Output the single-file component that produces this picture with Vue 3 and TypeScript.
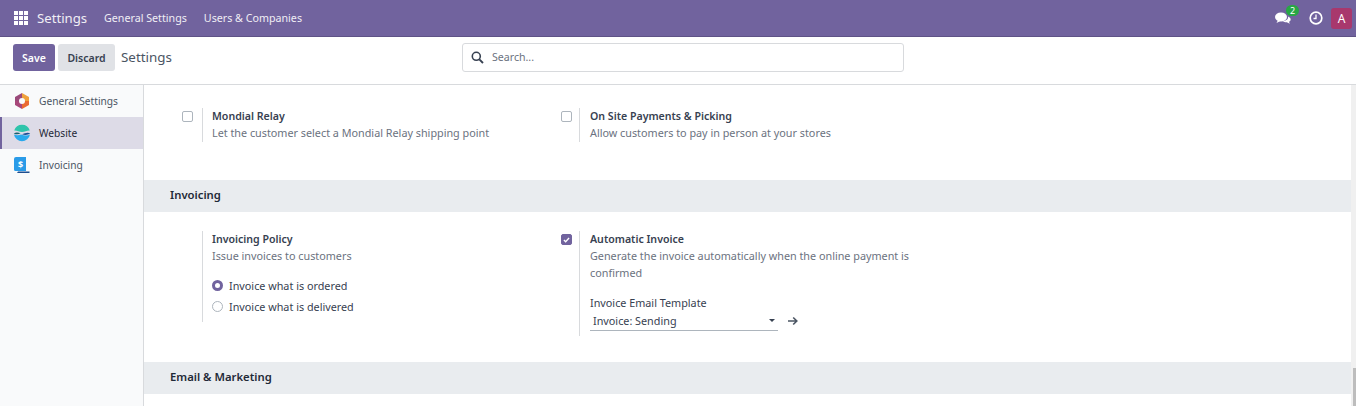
<script setup lang="ts">
const navItems = ['General Settings', 'Users & Companies']
</script>

<template>
  <div class="page">
    <header class="nav">
      <svg class="apps" width="14" height="14" viewBox="0 0 14 14" fill="#fff">
        <rect x="0" y="0" width="4" height="4" /><rect x="5" y="0" width="4" height="4" /><rect x="10" y="0" width="4" height="4" />
        <rect x="0" y="5" width="4" height="4" /><rect x="5" y="5" width="4" height="4" /><rect x="10" y="5" width="4" height="4" />
        <rect x="0" y="10" width="4" height="4" /><rect x="5" y="10" width="4" height="4" /><rect x="10" y="10" width="4" height="4" />
      </svg>
      <span class="brand">Settings</span>
      <a v-for="n in navItems" :key="n" class="nav-link">{{ n }}</a>
      <div class="nav-right">
        <span class="chat">
          <svg width="16" height="14" viewBox="0 0 16 14" fill="#fff">
            <ellipse cx="6" cy="6" rx="6" ry="4.6" />
            <path d="M3 9l-1.500 3 4-2z" />
            <path d="M13 5.500c2 .8 3 2 2.600 3.500-.3 1-1 1.500-1.600 1.800l.8 2-3-1.600c-1.500.1-3-.3-4-1.200 3 0 5.800-1.600 5.200-4.500z" />
          </svg>
          <span class="badge">2</span>
        </span>
        <svg class="clock" width="14" height="14" viewBox="0 0 14 14" fill="none" stroke="#fff">
          <circle cx="7" cy="7" r="5.800" stroke-width="1.700" />
          <path d="M7 3.500V7.500H4.500" stroke-width="1.300" />
        </svg>
        <span class="avatar">A</span>
      </div>
    </header>

    <div class="control">
      <button class="btn primary">Save</button>
      <button class="btn secondary">Discard</button>
      <span class="crumb">Settings</span>
      <div class="search">
        <svg width="13" height="13" viewBox="0 0 13 13" fill="none" stroke="#374151">
          <circle cx="5.300" cy="5.300" r="4" stroke-width="1.600" />
          <path d="M8.300 8.300L12 12" stroke-width="1.900" />
        </svg>
        <span class="placeholder">Search...</span>
      </div>
    </div>

    <div class="body">
      <aside class="side">
        <div class="side-item">
          <svg width="16" height="16" viewBox="0 0 16 16">
            <path d="M8 0L15 4V8H11A3 3 0 0 0 8 5V0Z" fill="#f0a13c" />
            <path d="M8 0V5A3 3 0 0 0 5 8H1V4Z" fill="#9a4a7a" />
            <path d="M1 8H5A3 3 0 0 0 8 11V16L1 12Z" fill="#a8487a" />
            <path d="M15 8V12L8 16V11A3 3 0 0 0 11 8Z" fill="#ea6a32" />
          </svg>
          <span>General Settings</span>
        </div>
        <div class="side-item active">
          <svg width="18" height="18" viewBox="0 0 18 18">
            <path d="M1.200 6.500A8.200 8.200 0 0 1 16.800 6.500C14 6.200 12 8 9 8 6 8 4 6.200 1.200 6.500Z" fill="#2fc4ab" />
            <path d="M.8 9.400C3 8 5.500 8.400 7.500 9.300 5.500 10.500 3 10.700.8 9.400Z" fill="#17606e" />
            <path d="M9 10.200C11.500 9.300 14.500 7.800 17.200 9.200 15 11 12 11.400 9 10.200Z" fill="#1c4f96" />
            <path d="M.9 10.600C3.500 11.600 6 11.300 8.200 10.500 11 11.800 14.500 12 17 10.500A8.200 8.200 0 0 1 .9 10.600Z" fill="#2aa9ec" />
          </svg>
          <span>Website</span>
        </div>
        <div class="side-item">
          <svg width="16" height="16" viewBox="0 0 16 16">
            <path d="M2 0H12V14H1.500A1.500 1.500 0 0 1 0 12.500V2A2 2 0 0 1 2 0Z" fill="#2a9be8" />
            <path d="M4 14.500H15.500V16H3Z" fill="#1d4e8f" />
            <text x="4" y="10.500" class="dollar">$</text>
          </svg>
          <span>Invoicing</span>
        </div>
      </aside>

      <main class="content">
        <div class="grid top">
          <div class="setting">
            <div class="left"><span class="check"></span></div>
            <div class="right">
              <div class="title">Mondial Relay</div>
              <div class="desc">Let the customer select a Mondial Relay shipping point</div>
            </div>
          </div>
          <div class="setting">
            <div class="left"><span class="check"></span></div>
            <div class="right">
              <div class="title">On Site Payments &amp; Picking</div>
              <div class="desc">Allow customers to pay in person at your stores</div>
            </div>
          </div>
        </div>

        <h2 class="section">Invoicing</h2>

        <div class="grid mid">
          <div class="setting">
            <div class="left"></div>
            <div class="right">
              <div class="title">Invoicing Policy</div>
              <div class="desc">Issue invoices to customers</div>
              <div class="radios">
                <label class="radio"><span class="dot on"></span>Invoice what is ordered</label>
                <label class="radio"><span class="dot"></span>Invoice what is delivered</label>
              </div>
            </div>
          </div>
          <div class="setting">
            <div class="left">
              <span class="check on">
                <svg width="7" height="6" viewBox="0 0 8 7" fill="none" stroke="#fff" stroke-width="1.600"><path d="M1 3.500L3 5.500L7 1.200" /></svg>
              </span>
            </div>
            <div class="right">
              <div class="title">Automatic Invoice</div>
              <div class="desc">Generate the invoice automatically when the online payment is confirmed</div>
              <div class="field-label">Invoice Email Template</div>
              <div class="field-row">
                <div class="select">
                  <span>Invoice: Sending</span>
                  <i class="caret"></i>
                </div>
                <svg class="arrow" width="10" height="10" viewBox="0 0 10 10" fill="none" stroke="#4b5563" stroke-width="1.600">
                  <path d="M0 5H8.500M5.200 1.500L8.800 5L5.200 8.500" />
                </svg>
              </div>
            </div>
          </div>
        </div>

        <h2 class="section">Email &amp; Marketing</h2>
      </main>

      <div class="scrollbar"><div class="thumb"></div></div>
    </div>
  </div>
</template>

<style>
html, body { margin: 0; overflow: hidden; }
</style>

<style scoped>
.page {
  width: 1356px;
  height: 406px;
  overflow: hidden;
  background: #fff;
  font-family: "Noto Sans", sans-serif;
  font-size: 10.800px;
  color: #374151;
  display: flex;
  flex-direction: column;
}
.nav {
  height: 37px;
  box-sizing: border-box;
  flex: none;
  background: #71639e;
  border-bottom: 1px solid #5f5386;
  display: flex;
  align-items: center;
  padding-left: 14px;
  color: #fff;
}
.apps { flex: none; }
.brand { font-size: 13.200px; margin-left: 9px; color: #f0eef5; width: 59px; }
.nav-link { font-size: 10.700px; margin-left: 8px; margin-right: 8px; color: #f0eef5; }
.nav-link + .nav-link { margin-left: 9px; }
.nav-right {
  margin-left: auto;
  display: flex;
  align-items: center;
  height: 100%;
}
.chat { position: relative; width: 16px; height: 14px; margin-right: 18px; display: block; }
.chat svg { display: block; }
.badge {
  position: absolute;
  left: 11px;
  top: -6px;
  width: 13px;
  height: 11px;
  border-radius: 6px;
  background: #28a745;
  color: #fff;
  font-size: 9px;
  line-height: 11px;
  text-align: center;
}
.clock { margin-right: 8px; }
.avatar {
  width: 21px;
  height: 21px;
  margin-right: 4px;
  background: #a8386d;
  border-radius: 3px;
  font-size: 12px;
  line-height: 22px;
  text-align: center;
  color: #fff;
}
.control {
  height: 48px;
  flex: none;
  border-bottom: 1px solid #d8dadd;
  display: flex;
  align-items: flex-start;
  padding: 7px 0 0 13px;
  position: relative;
  box-sizing: border-box;
}
.btn {
  height: 27px;
  border: 0;
  border-radius: 3px;
  font: 600 10.500px "Noto Sans", sans-serif;
  padding: 0;
}
.primary { width: 42px; background: #71639e; color: #fff; }
.secondary { width: 57px; margin-left: 3px; background: #e0e2e6; color: #374151; }
.crumb { font-size: 13.400px; line-height: 27px; margin-left: 6px; color: #4b5563; }
.search {
  position: absolute;
  left: 462px;
  top: 6px;
  width: 442px;
  height: 29px;
  box-sizing: border-box;
  border: 1px solid #d8dadd;
  border-radius: 3px;
  display: flex;
  align-items: center;
  padding-left: 8px;
}
.placeholder { margin: -1px 0 0 8px; color: #6b7280; font-size: 10.600px; }
.body { flex: 1; display: flex; min-height: 0; }
.side {
  width: 144px;
  flex: none;
  box-sizing: border-box;
  background: #f9fafb;
  border-right: 1px solid #d8dadd;
}
.side-item {
  height: 32px;
  display: flex;
  align-items: center;
  padding-left: 14px;
  font-size: 10.200px;
  color: #4b5563;
  box-sizing: border-box;
}
.side-item span { margin-left: 9px; }
.side-item.active {
  background: #dddbe7;
  border-left: 2px solid #71639e;
  padding-left: 11px;
  color: #1f2937;
}
.side-item.active span { margin-left: 8px; }
.dollar { font: 700 9px "Noto Sans", sans-serif; fill: #fff; }
.content { flex: 1; min-width: 0; }
.grid {
  display: grid;
  grid-template-columns: 378px 378px;
  padding-left: 24px;
}
.top { padding-top: 23px; height: 95px; box-sizing: border-box; }
.mid { padding-top: 19px; height: 150px; box-sizing: border-box; }
.setting { display: flex; align-items: flex-start; }
.left { width: 34px; flex: none; padding-left: 14px; box-sizing: border-box; padding-top: 3px; }
.setting:nth-child(2) .left { width: 33px; padding-left: 15px; }
.right {
  width: 332px;
  box-sizing: border-box;
  border-left: 1px solid #d8dadd;
  padding-left: 9px;
  padding-bottom: 2px;
}
.top .right { padding-bottom: 1px; }
.mid .right { padding-bottom: 5px; }
.setting:nth-child(2) .right { padding-left: 10px; }
.title { font-size: 10.600px; font-weight: 600; line-height: 17px; margin-bottom: -1px; color: #374151; }
.desc { font-size: 10.800px; line-height: 17px; color: #6b7280; }
.check {
  display: flex;
  align-items: center;
  justify-content: center;
  width: 9px;
  height: 9px;
  border: 1px solid #adb5bd;
  border-radius: 2px;
  background: #fff;
}
.check.on { background: #71639e; border-color: #71639e; }
.radios { margin-top: 11px; }
.radio { display: flex; align-items: center; height: 21px; font-size: 10.800px; }
.dot {
  width: 9px;
  height: 9px;
  border: 1px solid #adb5bd;
  border-radius: 50%;
  margin-right: 6px;
  box-sizing: content-box;
  flex: none;
}
.dot.on { background: #fff; border: 3px solid #71639e; width: 5px; height: 5px; }
.field-label { margin-top: 13px; line-height: 17px; font-size: 10.800px; color: #374151; }
.field-row { display: flex; align-items: center; }
.select {
  width: 188px;
  height: 20px;
  box-sizing: border-box;
  border-bottom: 1px solid #adb5bd;
  padding-left: 3px;
  display: flex;
  align-items: center;
  justify-content: space-between;
  padding-right: 3px;
  font-size: 10.800px;
}
.caret { width: 0; height: 0; border: 3px solid transparent; border-top-color: #374151; border-bottom: 0; }
.arrow { margin-left: 10px; }
.section {
  margin: 0;
  height: 32px;
  background: #e9ecef;
  padding-left: 26px;
  font-size: 11.300px;
  font-weight: 600;
  line-height: 30px;
  color: #1f2937;
}
.scrollbar { width: 5px; flex: none; background: #f0f0f0; position: relative; }
.thumb { position: absolute; left: 2px; right: 0; top: 283px; bottom: 0; background: #bdbdbd; }
</style>
